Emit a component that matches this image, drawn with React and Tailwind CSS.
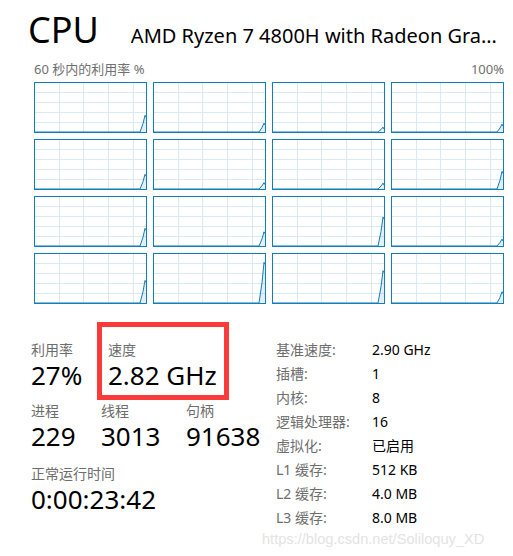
import React from 'react';

const peaks = [
  0.34, 0.18, 0.1, 0.16,
  0.3, 0.13, 0.12, 0.36,
  0.36, 0.29, 0.59, 0.14,
  0.46, 0.83, 0.66, 0.23,
];

const details = [
  ['基准速度:', '2.90 GHz'],
  ['插槽:', '1'],
  ['内核:', '8'],
  ['逻辑处理器:', '16'],
  ['虚拟化:', '已启用'],
  ['L1 缓存:', '512 KB'],
  ['L2 缓存:', '4.0 MB'],
  ['L3 缓存:', '8.0 MB'],
];

const font = { fontFamily: '"Noto Sans", "Noto Sans CJK SC", sans-serif' };

const CoreGraph = ({ peak }) => {
  const top = 50 - peak * 49;
  const pts = `1,50 106,50 109,${50 - peak * 49 * 0.5} 111,${top} 112,${top + 2}`;
  return (
    <svg width="113" height="51" viewBox="0 0 113 51" shapeRendering="crispEdges">
      <rect x="0" y="0" width="113" height="51" fill="#fff" />
      {[10, 20, 30, 40].map((y) => (
        <line key={y} x1="1" x2="112" y1={y + 0.5} y2={y + 0.5} stroke="#d9eaf4" />
      ))}
      {[25, 49, 74, 99].map((x) => (
        <line key={x} x1={x + 0.5} x2={x + 0.5} y1="1" y2="50" stroke="#d9eaf4" />
      ))}
      <polygon points={pts + ' 112,50'} fill="#117dbb" fillOpacity="0.12" shapeRendering="auto" />
      <polyline points={pts} fill="none" stroke="#117dbb" strokeWidth="1" shapeRendering="auto" />
      <rect x="0.5" y="0.5" width="112" height="50" fill="none" stroke="#117dbb" />
    </svg>
  );
};

const Stat = ({ label, value, className = '' }) => (
  <div className={'shrink-0 whitespace-nowrap ' + className}>
    <div className="text-[14px] leading-[18px] text-[#6d6d6d]">{label}</div>
    <div className="text-[26px] leading-[32px] text-black">{value}</div>
  </div>
);

const App = () => {
  return (
    <div className="w-[513px] h-[556px] bg-white relative overflow-hidden" style={font}>
      <div className="flex items-baseline pl-[28px] pt-[8px] h-[52px]">
        <span className="text-[36px] leading-[44px] text-black">CPU</span>
        <span className="ml-[32px] w-[377px] truncate text-[20px] leading-[28px] text-black">
          AMD Ryzen 7 4800H with Radeon Graphics
        </span>
      </div>
      <div className="flex justify-between pl-[34px] pr-[9px] mt-[8px] text-[13px] leading-[18px] text-[#707070]">
        <span>60 秒内的利用率 %</span>
        <span>100%</span>
      </div>
      <div className="grid grid-cols-[repeat(4,113px)] gap-[6px] pl-[34px] mt-[4px]">
        {peaks.map((p, i) => (
          <CoreGraph key={i} peak={p} />
        ))}
      </div>
      <div className="flex mt-[18px]">
        <div className="w-[250px] shrink-0 pl-[31px]">
          <div className="flex items-start">
            <Stat label="利用率" value="27%" className="w-[66px] mt-[19px]" />
            <div className="w-[132px] h-[78px] shrink-0 border-[5px] border-[#fb3a3a] pl-[6px] pt-[14px]">
              <Stat label="速度" value="2.82 GHz" />
            </div>
          </div>
          <div className="flex mt-[2px]">
            <Stat label="进程" value="229" className="w-[70px]" />
            <Stat label="线程" value="3013" className="w-[85px]" />
            <Stat label="句柄" value="91638" />
          </div>
          <Stat label="正常运行时间" value="0:00:23:42" className="mt-[13px]" />
        </div>
        <div className="pl-[26px] pt-[16px] text-[14px] leading-[24px]">
          {details.map(([k, v]) => (
            <div key={k} className="flex">
              <span className="w-[96px] shrink-0 text-[#6d6d6d]">{k}</span>
              <span className="text-black">{v}</span>
            </div>
          ))}
        </div>
      </div>
      <div
        className="absolute left-[262px] top-[527px] text-[14.6px] leading-[24px] text-[#e3e3e3]"
        style={{ fontFamily: '"Liberation Sans", Arial, sans-serif' }}
      >
        https://blog.csdn.net/Soliloquy_XD
      </div>
    </div>
  );
};

export default App;
